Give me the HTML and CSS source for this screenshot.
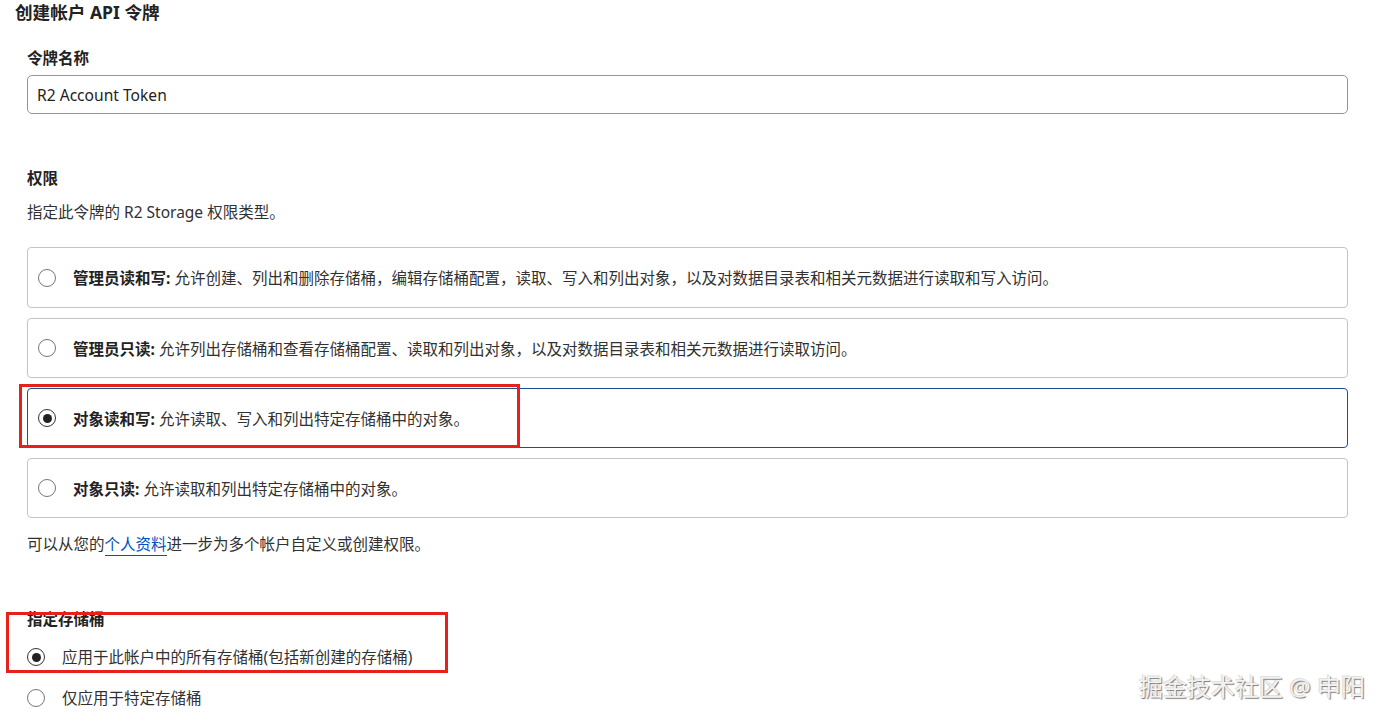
FILE: index.html
```html
<!DOCTYPE html>
<html lang="zh-CN">
<head>
    <meta charset="UTF-8">
    <title>创建帐户 API 令牌</title>
    <link rel="stylesheet" href="styles.css">
</head>
<body>
    <div class="page">
        <h2 class="title">创建帐户 API 令牌</h2>

        <div class="label first">令牌名称</div>
        <div class="text-input">R2 Account Token</div>

        <div class="label section">权限</div>
        <div class="hint">指定此令牌的 R2 Storage 权限类型。</div>

        <div class="options">
            <label class="option">
                <span class="radio"></span>
                <span><b>管理员读和写:</b> 允许创建、列出和删除存储桶，编辑存储桶配置，读取、写入和列出对象，以及对数据目录表和相关元数据进行读取和写入访问。</span>
            </label>
            <label class="option">
                <span class="radio"></span>
                <span><b>管理员只读:</b> 允许列出存储桶和查看存储桶配置、读取和列出对象，以及对数据目录表和相关元数据进行读取访问。</span>
            </label>
            <label class="option selected">
                <span class="radio checked"></span>
                <span><b>对象读和写:</b> 允许读取、写入和列出特定存储桶中的对象。</span>
            </label>
            <label class="option">
                <span class="radio"></span>
                <span><b>对象只读:</b> 允许读取和列出特定存储桶中的对象。</span>
            </label>
        </div>

        <div class="footnote">可以从您的<a href="#">个人资料</a>进一步为多个帐户自定义或创建权限。</div>

        <div class="label section">指定存储桶</div>
        <div class="choice first-choice">
            <span class="radio checked"></span>
            <span>应用于此帐户中的所有存储桶(包括新创建的存储桶)</span>
        </div>
        <div class="choice">
            <span class="radio"></span>
            <span>仅应用于特定存储桶</span>
        </div>
    </div>

    <!-- 标注框 -->
    <div class="mark mark-1"></div>
    <div class="mark mark-2"></div>

    <div class="watermark">掘金技术社区 @ 申阳</div>
</body>
</html>
```

FILE: styles.css
```css
body {
    margin: 0;
    background: #fff;
    font-family: "Noto Sans", "Noto Sans CJK SC", sans-serif;
    font-size: 15.5px;
    color: #313131;
    overflow: hidden;
}
.page {
    padding: 0 47px 0 27px;
}
.title {
    margin: 0 0 0 -12px;
    font-size: 17.6px;
    line-height: 24px;
    font-weight: bold;
    color: #222;
}
.label {
    font-weight: bold;
    line-height: 22px;
    color: #222;
}
.label.first {
    margin-top: 23px;
}
.label.section {
    margin-top: 53px;
}
.text-input {
    margin-top: 6px;
    height: 39px;
    box-sizing: border-box;
    border: 1px solid #949494;
    border-radius: 5px;
    padding: 0 9px;
    display: flex;
    align-items: center;
    font-size: 15.6px;
    color: #222;
}
.hint {
    margin-top: 12px;
    line-height: 22px;
}
.options {
    margin-top: 24px;
    display: flex;
    flex-direction: column;
    gap: 10px;
}
.option {
    height: 61px;
    box-sizing: border-box;
    border: 1px solid #c4c4c4;
    border-radius: 4px;
    display: flex;
    align-items: center;
    gap: 17px;
    padding-left: 10px;
}
.option + .option {
    height: 60px;
}
.option b {
    color: #222;
}
.option.selected {
    border-color: #1b4f91;
}
.radio {
    width: 18px;
    height: 18px;
    box-sizing: border-box;
    border: 1px solid #767676;
    border-radius: 50%;
    flex-shrink: 0;
    display: flex;
    align-items: center;
    justify-content: center;
}
.radio.checked {
    border-color: #333;
}
.radio.checked::after {
    content: "";
    width: 9px;
    height: 9px;
    border-radius: 50%;
    background: #222;
}
.footnote {
    margin-top: 15px;
    line-height: 22px;
}
.footnote a {
    color: #0051c3;
    text-decoration: none;
    border-bottom: 1px solid #0051c3;
}
.choice {
    display: flex;
    align-items: center;
    gap: 17px;
    line-height: 22px;
    margin-top: 19px;
}
.choice.first-choice {
    margin-top: 16px;
}
.mark {
    position: absolute;
    border: 3px solid #e8201b;
    box-sizing: border-box;
}
.mark-1 {
    left: 19px;
    top: 384px;
    width: 501px;
    height: 64px;
}
.mark-2 {
    left: 6px;
    top: 612px;
    width: 442px;
    height: 61px;
}
.watermark {
    position: absolute;
    left: 1139px;
    top: 672px;
    font-size: 24px;
    line-height: 30px;
    color: #f2f2f2;
    text-shadow: 1px 1px 1px #7a7a7a, -1px -1px 0 #e0e0e0;
    white-space: nowrap;
}
```
